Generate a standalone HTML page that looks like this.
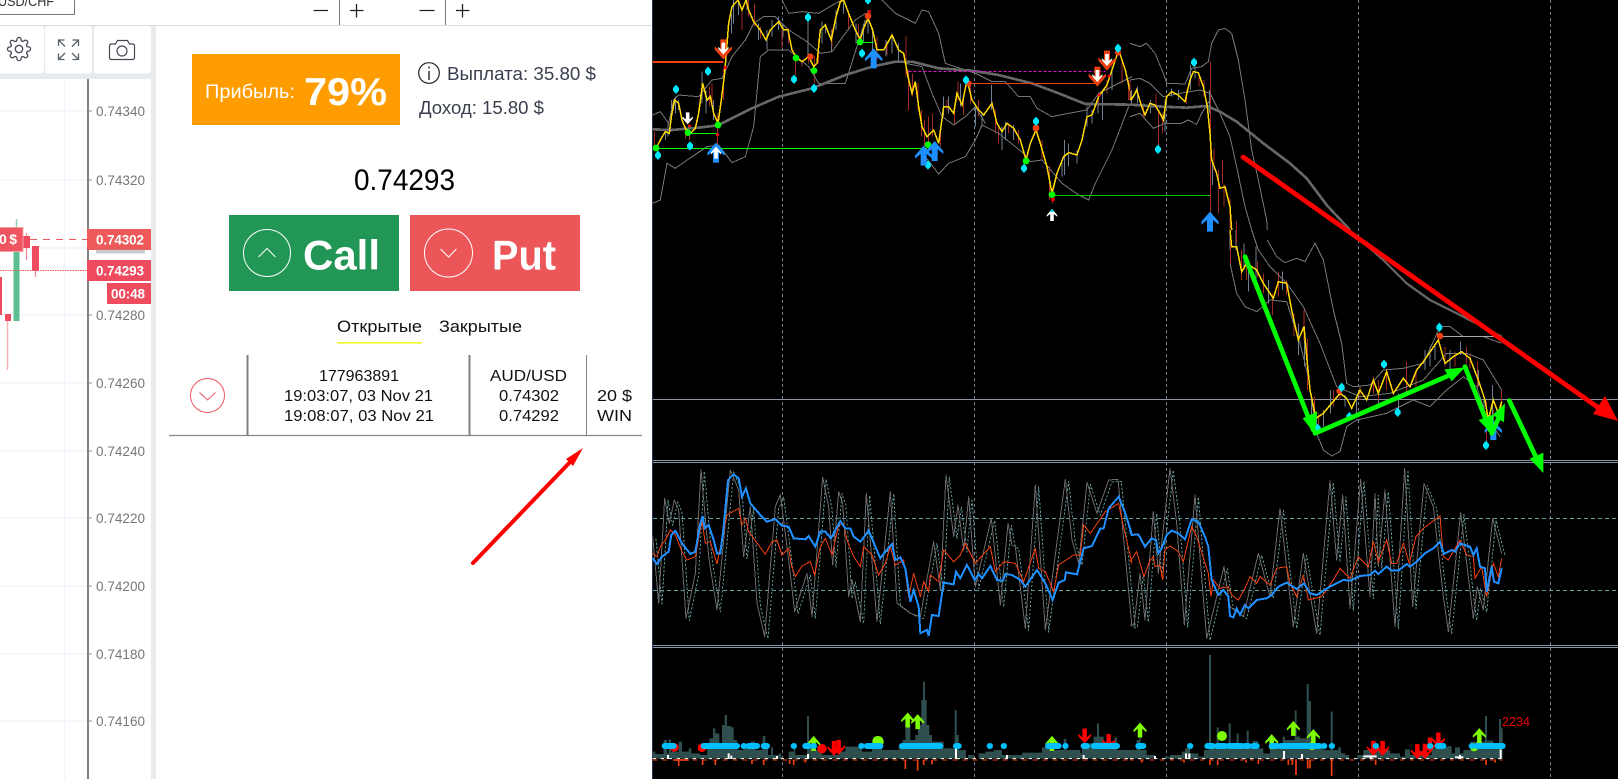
<!DOCTYPE html>
<html lang="ru"><head><meta charset="utf-8"><title>Chart</title>
<style>html,body{margin:0;padding:0;background:#fff;width:1618px;height:779px;overflow:hidden}svg{display:block}text{font-family:"Liberation Sans",sans-serif}</style></head><body>
<svg width="1618" height="779" viewBox="0 0 1618 779" xmlns="http://www.w3.org/2000/svg">
<defs>
<polygon id="up" points="0,-30 26,0 26,9 9,-5 9,30 -9,30 -9,-5 -26,9 -26,0"/>
<polygon id="dia" points="0,-14 9,-4 9,4 0,14 -9,4 -9,-4"/>
<polyline id="os1" fill="none" stroke-linejoin="round" points="62,290 80,490 98,175 112,250 127,180 140,210 162,535 190,400 207,88 230,350 255,510 295,90 320,150 335,350 355,200 375,490 398,590 430,200 445,165 470,360 488,515 525,400 540,530 572,112 590,200 602,375 620,155 632,190 650,470 660,420 685,545 703,160 735,545 775,155 795,490 835,520 865,530 905,305 925,450 942,105 965,290 978,195 995,330 1010,170 1030,440 1078,235 1105,495 1128,250 1140,315 1150,320 1180,565 1210,135 1240,570 1300,118 1320,300 1340,370 1365,127 1395,220 1430,120 1458,118 1480,350 1500,560"/>
<polyline id="os2" fill="none" stroke-linejoin="round" points="0,555 12,555 30,400 45,540 70,215 85,400 120,85 140,250 163,555 195,165 230,595 282,380 300,500 340,530 385,340 420,470 450,205 490,560 520,340 560,580 600,122 620,360 638,165 660,505 692,118 720,470 735,160 745,380 765,150 795,560 824,85 848,500 882,130 910,200 940,470 955,575 992,218 1030,535 1042,440 1060,510 1088,235 1115,340"/>
</defs>
<!-- left -->
<rect x="151" y="26" width="5" height="753" fill="#e8ebee"/>
<rect x="0" y="26" width="151" height="53" fill="#e8ebee"/>
<rect x="-6" y="26" width="50" height="47.500" rx="3" fill="#fff"/>
<rect x="45" y="26" width="47" height="47.500" rx="3" fill="#fff"/>
<rect x="94" y="26" width="57" height="47.500" rx="3" fill="#fff"/>
<rect x="-6" y="79" width="157" height="700" rx="4" fill="#fff"/>
<path d="M0 25.500H652" stroke="#ddd" stroke-width="1"/>
<rect x="-5" y="-10" width="79.500" height="24.500" fill="#fff" stroke="#777"/>
<text x="-2" y="6" font-size="14" fill="#333" textLength="56" lengthAdjust="spacingAndGlyphs">USD/CHF</text>
<g transform="translate(6.400,36.400) scale(1.050)" fill="none" stroke="#454a55" stroke-width="1.250" stroke-linejoin="round" stroke-linecap="round"><circle cx="12" cy="12" r="3.500"/><path d="M19.4 15a1.65 1.65 0 0 0 .33 1.82l.06.06a2 2 0 0 1 0 2.83 2 2 0 0 1-2.83 0l-.06-.06a1.65 1.65 0 0 0-1.82-.33 1.65 1.65 0 0 0-1 1.51V21a2 2 0 0 1-2 2 2 2 0 0 1-2-2v-.09A1.65 1.65 0 0 0 9 19.4a1.65 1.65 0 0 0-1.82.33l-.06.06a2 2 0 0 1-2.83 0 2 2 0 0 1 0-2.83l.06-.06a1.65 1.65 0 0 0 .33-1.82 1.65 1.65 0 0 0-1.51-1H3a2 2 0 0 1-2-2 2 2 0 0 1 2-2h.09A1.65 1.65 0 0 0 4.6 9a1.65 1.65 0 0 0-.33-1.82l-.06-.06a2 2 0 0 1 0-2.83 2 2 0 0 1 2.83 0l.06.06a1.65 1.65 0 0 0 1.82.33H9a1.65 1.65 0 0 0 1-1.51V3a2 2 0 0 1 2-2 2 2 0 0 1 2 2v.09a1.65 1.65 0 0 0 1 1.51 1.65 1.65 0 0 0 1.82-.33l.06-.06a2 2 0 0 1 2.83 0 2 2 0 0 1 0 2.83l-.06.06a1.65 1.65 0 0 0-.33 1.82V9a1.65 1.65 0 0 0 1.51 1H21a2 2 0 0 1 2 2 2 2 0 0 1-2 2h-.09a1.65 1.65 0 0 0-1.51 1z"/></g>
<path d="M58.500 46V40H64.500M58.500 40L65 46.500M72.500 40H78.500V46M78.500 40L72 46.500M58.500 53.500V59.500H64.500M58.500 59.500L65 53M72.500 59.500H78.500V53.500M78.500 59.500L72 53" fill="none" stroke="#5a6069" stroke-width="1.300"/>
<path d="M111.500 44H115.500L117.500 40.500H127.500L129.500 44H132.500Q134.500 44 134.500 46V57.500Q134.500 59.500 132.500 59.500H111.500Q109.500 59.500 109.500 57.500V46Q109.500 44 111.500 44Z" fill="none" stroke="#454a55" stroke-width="1.200"/>
<circle cx="122" cy="51" r="5" fill="none" stroke="#454a55" stroke-width="1.200"/>
<!-- plot grid -->
<path d="M0 111H87M0 180H87M0 248H87M0 315H87M0 383H87M0 451H87M0 518H87M0 586H87M0 654H87M0 721H87M64.500 79V779" stroke="#eef4f9" stroke-width="1.200"/>
<path d="M88 79V779" stroke="#808080" stroke-width="2"/>
<path d="M89 111H92M89 180H92M89 315H92M89 383H92M89 451H92M89 518H92M89 586H92M89 654H92M89 721H92" stroke="#888"/>
<g font-size="13.500" fill="#777">
<text x="96" y="116" textLength="49">0.74340</text>
<text x="96" y="185" textLength="49">0.74320</text>
<text x="96" y="320" textLength="49">0.74280</text>
<text x="96" y="388" textLength="49">0.74260</text>
<text x="96" y="456" textLength="49">0.74240</text>
<text x="96" y="523" textLength="49">0.74220</text>
<text x="96" y="591" textLength="49">0.74200</text>
<text x="96" y="659" textLength="49">0.74180</text>
<text x="96" y="726" textLength="49">0.74160</text>
</g>
<path d="M7.500 320V370" stroke="#f4b5bb" stroke-width="1.500"/>
<path d="M16.500 219V252" stroke="#8fd4b2" stroke-width="1.500"/>
<path d="M26.500 233V260M35.500 270V277" stroke="#f08a94" stroke-width="1.300"/>
<rect x="0" y="277" width="2" height="38" fill="#ee4b5f"/>
<rect x="5" y="314" width="6" height="7" fill="#ee4b5f"/>
<rect x="13.500" y="250" width="6" height="71" fill="#5cbf8f"/>
<rect x="23.500" y="236" width="6.500" height="12" fill="#ee4b5f"/>
<rect x="32" y="246" width="7" height="25" fill="#ee4b5f"/>
<path d="M30 239.500H87" stroke="#ee5560" stroke-dasharray="7 6" stroke-width="1"/>
<path d="M0 270.500H87" stroke="#ee5560" stroke-dasharray="1.500 1" stroke-width="1"/>
<rect x="-3" y="227.500" width="26" height="24" fill="#ee5560" stroke="#f4a0a6"/>
<text x="-1" y="244" font-size="14" font-weight="bold" fill="#fff" xml:space="preserve" textLength="18">0 $</text>
<rect x="87" y="229" width="64" height="21" fill="#ee5a5a"/>
<rect x="96" y="249.500" width="49" height="4" fill="#9a9a9a" opacity=".5"/>
<rect x="87" y="260" width="64" height="21" fill="#ee4b5f"/>
<rect x="107" y="283" width="44" height="21" fill="#ee4b5f"/>
<g font-size="13.500" font-weight="bold" fill="#fff">
<text x="96" y="244.500" textLength="48">0.74302</text>
<text x="96" y="275.500" textLength="48">0.74293</text>
<text x="111" y="298.500" textLength="34">00:48</text>
</g>
<!-- top controls -->
<path d="M313.500 10.500H328M419.500 10.500H434.500M350 10.500H363.500M356.500 4V17.500M456 10.500H469.500M462.500 4V17.500" stroke="#222" stroke-width="1.300"/>
<path d="M339.500 0V25M445.500 0V25" stroke="#777" stroke-width="1"/>
<!-- panel -->
<rect x="192" y="54" width="208" height="71" fill="#ff9c00"/>
<text x="205" y="98" font-size="19.500" fill="#fff" textLength="90" lengthAdjust="spacingAndGlyphs">Прибыль:</text>
<text x="304" y="105" font-size="39" font-weight="bold" fill="#fff" textLength="83" lengthAdjust="spacingAndGlyphs">79%</text>
<circle cx="429" cy="73" r="10.300" fill="none" stroke="#222" stroke-width="1.200"/>
<path d="M429 71V80M429 66.500V68.500" stroke="#222" stroke-width="1.400"/>
<text x="447" y="80" font-size="18.500" fill="#3a3f4d" textLength="149" lengthAdjust="spacingAndGlyphs">Выплата: 35.80 $</text>
<text x="419" y="114" font-size="18.500" fill="#3a3f4d" textLength="125" lengthAdjust="spacingAndGlyphs">Доход: 15.80 $</text>
<text x="354" y="190" font-size="30" fill="#000" textLength="101" lengthAdjust="spacingAndGlyphs">0.74293</text>
<rect x="229" y="215" width="170" height="76" fill="#229654"/>
<circle cx="267" cy="253" r="23.500" fill="none" stroke="#fff" stroke-width="1"/>
<path d="M258.500 257L267 248.500L275.500 257" fill="none" stroke="#fff" stroke-width="1"/>
<text x="303" y="269.500" font-size="42" font-weight="bold" fill="#fff" textLength="77" lengthAdjust="spacingAndGlyphs">Call</text>
<rect x="410" y="215" width="170" height="76" fill="#ed5658"/>
<circle cx="448.500" cy="253" r="24" fill="none" stroke="#fff" stroke-width="1"/>
<path d="M440.500 249L448.500 257L456.500 249" fill="none" stroke="#fff" stroke-width="1"/>
<text x="492" y="269.500" font-size="42" font-weight="bold" fill="#fff" textLength="64" lengthAdjust="spacingAndGlyphs">Put</text>
<text x="337" y="332" font-size="17" fill="#111" textLength="85" lengthAdjust="spacingAndGlyphs">Открытые</text>
<text x="439" y="332" font-size="17" fill="#111" textLength="83" lengthAdjust="spacingAndGlyphs">Закрытые</text>
<rect x="337" y="342" width="85" height="1.700" fill="#eef83a"/>
<path d="M169 435.500H642" stroke="#888" stroke-width="1.300"/>
<path d="M247.500 355V436M469.500 355V436" stroke="#808080" stroke-width="2"/>
<path d="M586.500 355V436" stroke="#808080" stroke-width="1"/>
<circle cx="207.500" cy="395.500" r="17" fill="none" stroke="#ee5560" stroke-width="1"/>
<path d="M199.500 392.500L207.500 400L215.500 392.500" fill="none" stroke="#ee5560" stroke-width="1"/>
<g font-size="16" fill="#111">
<text x="319" y="381" textLength="80" lengthAdjust="spacingAndGlyphs">177963891</text>
<text x="284" y="401" textLength="149" lengthAdjust="spacingAndGlyphs">19:03:07, 03 Nov 21</text>
<text x="284" y="421" textLength="150" lengthAdjust="spacingAndGlyphs">19:08:07, 03 Nov 21</text>
<text x="490" y="381" textLength="77" lengthAdjust="spacingAndGlyphs">AUD/USD</text>
<text x="499" y="401" textLength="60" lengthAdjust="spacingAndGlyphs">0.74302</text>
<text x="499" y="421" textLength="60" lengthAdjust="spacingAndGlyphs">0.74292</text>
<text x="597" y="401" textLength="35" lengthAdjust="spacingAndGlyphs">20 $</text>
<text x="597" y="421" textLength="35" lengthAdjust="spacingAndGlyphs">WIN</text>
</g>
<path d="M473 563L573 459" stroke="#f00" stroke-width="4" stroke-linecap="round"/>
<polygon points="583,448 573,466 566,459" fill="#f00"/>
<!-- terminal -->
<rect x="652" y="0" width="966" height="779" fill="#000"/>
<path d="M652.500 0V779" stroke="#2a3560" stroke-width="1"/>
<path d="M782.500 0V779M974.500 0V779M1166.500 0V779M1358.500 0V779M1550.500 0V779" stroke="#71808f" stroke-dasharray="3 3" stroke-width="1"/>
<path d="M653 399.500H1618" stroke="#8a94a0" stroke-width="1"/>
<path d="M653 460.500H1618M653 462.500H1618M653 645.500H1618M653 647.500H1618" stroke="#8998ad" stroke-width="1"/>
<path d="M653 518.500H1618M653 590.500H1618" stroke="#5f9ea0" stroke-dasharray="4 3" stroke-width="1"/>
<!-- main z4 -->
<g transform="translate(632,0) scale(.33333)" fill="none" shape-rendering="crispEdges">
<path d="M100 385V420M108 370V410M118 300V360M130 290V340M140 300V330M210 215V310M222 270V340M245 300V360M298 40V100M305 0V70M320 0V45M345 0V30M380 70V120M405 90V150M420 60V110M440 50V90M453 70V110M528 60V170M548 190V240M570 65V130M580 70V100M598 90V155M612 30V90M635 0V40M672 70V130M695 70V125M708 30V100M722 85V150M762 120V170M780 100V160M800 130V185M935 290V350M950 290V340M985 250V320M1030 310V380M1050 340V380M1078 255V330M1110 380V450M1120 365V420M1145 375V420M1290 480V530M1298 420V525M1310 430V500M1335 450V490M1365 320V380M1380 330V370M1398 280V340M1412 270V360M1440 200V270" stroke="#708090" stroke-width="3"/>
<path d="M67 395V440M160 380V415M172 375V420M232 260V320M240 250V320M256 340V440M275 205V300M330 30V90M350 0V50M368 10V80M385 80V115M450 90V145M470 85V130M490 170V225M510 185V200M530 170V190M548 170V250M560 120V190M600 85V140M650 40V90M680 70V110M735 110V180M765 125V165M822 110V230M830 210V330M842 220V290M858 250V330M868 330V410M878 360V440M890 350V450M902 340V410M925 400V440M945 300V330M968 320V375M978 245V300M995 300V345M1015 250V310M1040 300V350M1090 330V400M1100 380V430M1130 370V400M1160 390V430M1230 420V480M1252 500V600M1262 590V610M1400 280V320M1425 240V280M1470 180V250M1490 240V300" stroke="#a52a20" stroke-width="3"/>
<g stroke="#777" stroke-width="3">
<polyline points="62,345 85,335 110,370 125,300 140,285 200,290 240,240 270,235 300,170 340,120 365,70 395,50 430,50 470,90 525,125 565,160 600,155 640,100 670,60 700,40"/>
<polyline points="450,0 470,40 510,35 560,40 610,10 630,0"/>
<polyline points="750,0 790,40 850,70 870,30 890,35 920,100 940,190 1030,220 1080,245 1120,245 1160,290 1195,290 1215,325 1260,350 1310,340 1365,330 1400,280 1460,250 1500,230"/>
<polyline points="62,610 85,600 105,490 130,505 180,470 225,440 260,435 300,488 340,470 365,380 385,170 410,150 470,150 530,200 560,250 640,250 700,60"/>
<polyline points="820,190 870,200 900,280 930,350 965,375 1000,350 1030,320 1060,370"/>
<polyline points="880,470 920,522 950,490 1000,470 1030,420 1050,375 1100,400 1175,460 1195,485 1230,480 1290,550 1340,585 1370,600 1390,550 1440,450 1490,320"/>
</g>
<polyline points="62,388 120,390 200,383 258,376 300,355 360,325 440,290 540,265 640,225 720,200 790,185 840,185 920,205 1020,212 1100,225 1200,250 1280,280 1360,312 1500,314" stroke="#666" stroke-width="8" stroke-linejoin="round"/>
<path d="M72 445H885M168 400H255M685 127H725" stroke="#0f0" stroke-width="3"/>
<path d="M1260 587H1500" stroke="#0c0" stroke-width="3"/>
<path d="M62 186H275" stroke="#f04010" stroke-width="6"/>
<path d="M1010 250H1395" stroke="#f04010" stroke-width="3"/>
<path d="M830 214H1420" stroke="#e010d0" stroke-width="3" stroke-dasharray="9 6"/>
<polyline points="65,440 72,445 85,420 100,395 112,400 118,350 128,300 140,310 150,360 160,385 175,400 190,385 200,340 212,250 225,300 235,290 245,340 258,370 268,300 278,220 282,170 290,70 300,20 318,0 330,30 342,0 350,30 365,65 385,90 402,120 415,90 440,65 455,90 468,90 480,150 495,175 510,185 530,170 545,200 555,190 565,90 580,75 598,120 612,50 625,5 635,0 650,40 670,90 685,120 695,85 708,55 722,90 735,150 755,150 780,105 800,150 815,160 828,230 840,280 850,245 860,320 870,380 885,410 905,390 920,430 935,320 950,320 965,340 975,280 990,315 1005,240 1020,300 1040,330 1055,345 1080,310 1095,370 1110,395 1125,370 1145,385 1165,420 1182,480 1195,430 1212,390 1225,430 1245,500 1260,580 1275,520 1295,470 1310,458 1335,465 1350,420 1365,350 1380,345 1400,290 1425,255 1445,195 1460,150 1480,210 1500,300" stroke="#ffd800" stroke-width="4.500"/>
<g shape-rendering="auto">
<g fill="#0f0" stroke="none"><circle cx="72" cy="444" r="10"/><circle cx="168" cy="398" r="10"/><circle cx="258" cy="375" r="10"/><circle cx="492" cy="174" r="10"/><circle cx="546" cy="212" r="10"/><circle cx="684" cy="126" r="10"/><circle cx="888" cy="434" r="10"/><circle cx="1182" cy="483" r="10"/><circle cx="1260" cy="584" r="10"/></g>
<g fill="#f04010" stroke="none"><circle cx="535" cy="170" r="10"/><circle cx="708" cy="48" r="10"/><circle cx="1010" cy="250" r="9"/><circle cx="1212" cy="384" r="10"/><circle cx="1458" cy="158" r="9"/></g>
<g fill="#f00" stroke="none"><rect x="275" y="199" width="9" height="8"/><rect x="168" y="374" width="9" height="7"/><rect x="252" y="401" width="9" height="7"/><rect x="1258" y="594" width="10" height="9"/><rect x="1397" y="281" width="9" height="8"/><rect x="1427" y="224" width="9" height="8"/><rect x="708" y="31" width="9" height="7"/></g>
<g fill="#00e8ff" stroke="none"><use href="#dia" x="78" y="466"/><use href="#dia" x="132" y="268"/><use href="#dia" x="174" y="438"/><use href="#dia" x="228" y="214"/><use href="#dia" x="486" y="238"/><use href="#dia" x="528" y="52"/><use href="#dia" x="546" y="265"/><use href="#dia" x="690" y="160"/><use href="#dia" x="888" y="495"/><use href="#dia" x="1002" y="240"/><use href="#dia" x="1176" y="505"/><use href="#dia" x="1212" y="364"/><use href="#dia" x="1458" y="145"/><use href="#dia" x="708" y="0"/></g>
<g stroke="none"><g fill="#1e90ff"><use href="#up" transform="translate(252,458)"/><use href="#up" transform="translate(725,175)"/><use href="#up" transform="translate(875,467)"/><use href="#up" transform="translate(908,453)"/></g>
<use href="#up" fill="#fff" transform="translate(252,458) scale(.6)"/>
<use href="#up" fill="#f04010" transform="translate(274,148) rotate(180)"/><use href="#up" fill="#fff" transform="translate(274,146) rotate(180) scale(.6)"/>
<use href="#up" fill="#f04010" transform="translate(1396,230) rotate(180)"/><use href="#up" fill="#fff" transform="translate(1396,228) rotate(180) scale(.6)"/>
<use href="#up" fill="#f04010" transform="translate(1425,182) rotate(180)"/><use href="#up" fill="#fff" transform="translate(1425,180) rotate(180) scale(.6)"/>
<use href="#up" fill="#fff" transform="translate(167,355) rotate(180) scale(.6)"/>
<use href="#up" fill="#fff" transform="translate(1260,645) scale(.6)"/><polygon points="1260,626 1266,636 1254,636" fill="#00e8ff"/></g>
</g>
</g>
<!-- main z5 -->
<g transform="translate(1130,0) scale(.33333)" fill="none" shape-rendering="crispEdges">
<path d="M5 270V310M22 260V310M62 300V340M105 300V395M125 265V290M145 270V300M182 195V270M195 190V235M238 270V340M248 480V555" stroke="#708090" stroke-width="3"/>
<path d="M0 240V300M40 310V350M78 280V325M85 330V440M97 340V400M170 270V310M207 225V260M222 240V290M241 185V640M252 445V510M265 510V640M277 480V550M282 550V620M300 595V690M319 665V690" stroke="#a52a20" stroke-width="3"/>
<g stroke="#777" stroke-width="3">
<polyline points="0,130 30,140 50,130 75,160 100,220 110,250 165,252 185,205 215,200 235,185 245,130 265,90 285,85 305,100 325,180 345,300 365,450 385,540 410,660 412,690"/>
<polyline points="0,240 30,235 60,250 100,290 150,280 210,270 240,280 270,340 300,410 320,500 345,620 365,690"/>
<polyline points="0,350 30,340 70,385 105,370 155,370 175,360 200,373 215,340 240,300"/>
</g>
<polyline points="0,314 100,320 170,323 230,318 270,335 320,365 400,430 480,490 530,535 590,615 660,690" stroke="#666" stroke-width="8" stroke-linejoin="round"/>
<path d="M0 586H240" stroke="#0c0" stroke-width="3"/>
<polyline points="0,300 10,290 20,270 35,320 45,345 60,310 75,315 90,340 100,360 110,290 125,275 145,285 165,305 180,240 190,215 205,218 220,260 232,320 240,400 245,480 260,520 270,565 285,560 300,620 305,690" stroke="#ffd800" stroke-width="4.500"/>
<g shape-rendering="auto"><g fill="#00e8ff" stroke="none"><use href="#dia" x="192" y="187"/><use href="#dia" x="84" y="448"/></g>
<use href="#up" fill="#1e90ff" transform="translate(240,665)"/></g>
</g>
<!-- main z6 -->
<g transform="translate(1130,230) scale(.33333)" fill="none" shape-rendering="crispEdges">
<path d="M300 0V60M318 0V60M342 40V120M355 100V185M378 50V180M415 150V220M458 125V180M505 280V375M523 330V410M545 510V590M560 545V590M580 540V590M602 480V550M645 495V530M680 510V550M745 490V520M805 490V545M885 360V420M900 350V410M915 340V390M960 360V420M992 335V375M1045 420V470M1062 510V560M1088 465V560" stroke="#708090" stroke-width="3"/>
<path d="M302 0V105M320 0V40M335 60V150M350 90V150M382 95V140M400 130V190M428 190V255M445 125V200M470 150V195M492 250V320M522 240V330M532 325V480M553 500V600M565 550V590M610 480V530M630 480V510M690 470V510M730 440V490M745 450V510M770 415V480M830 395V450M830 440V490M858 420V480M945 350V410M975 365V410M1010 350V400M1020 370V415M1043 395V475M1070 515V640M1090 540V600M1115 480V560" stroke="#a52a20" stroke-width="3"/>
<g stroke="#777" stroke-width="3">
<polyline points="412,30 440,80 465,98 500,85 525,95 555,40 580,90 610,240 635,340 650,460 670,470 720,465 760,420 820,415 880,400 930,290 960,290 1000,320 1060,320 1115,340"/>
<polyline points="365,0 385,60 420,110 470,160 520,230 570,340 620,470 690,500 780,490 880,450 950,370 1010,370 1060,390 1115,480"/>
<polyline points="300,100 320,190 345,230 380,245 420,210 470,215 510,340 535,440 560,610 580,660 605,678 630,665 650,590 680,570 770,550 850,510 900,530 950,480 1000,440 1040,470 1070,560 1110,620"/>
</g>
<polyline points="680,20 760,90 830,160 900,210 1000,260 1115,320" stroke="#666" stroke-width="7" stroke-linejoin="round"/>
<path d="M930 320H1115" stroke="#aaa" stroke-width="3"/>
<polyline points="300,0 305,50 320,50 335,125 350,100 380,120 400,160 430,205 445,155 470,160 485,240 505,330 522,290 532,400 540,480 558,565 580,550 605,520 630,490 650,505 665,535 690,480 710,510 730,450 745,490 770,425 790,490 820,445 840,470 860,420 880,395 925,330 945,400 970,380 995,365 1020,385 1045,450 1065,510 1075,570 1090,510 1105,550 1115,515" stroke="#ffd800" stroke-width="4.500"/>
<g shape-rendering="auto">
<g stroke="none"><circle cx="628" cy="483" r="9" fill="#f04010"/><circle cx="930" cy="318" r="10" fill="#f04010"/>
<g fill="#00e8ff"><use href="#dia" x="928" y="292"/><use href="#dia" x="635" y="472"/><use href="#dia" x="762" y="403"/><use href="#dia" x="803" y="547"/><use href="#dia" x="563" y="595"/><use href="#dia" x="658" y="560"/><use href="#dia" x="1068" y="646"/></g>
<use href="#up" fill="#1e90ff" transform="translate(1090,600) scale(1)"/></g>
<path d="M345 80L550 600M555 610L960 435M1005 410L1080 600M1085 610L1115 545M1138 512L1222 690" stroke="#00ff00" stroke-width="14" stroke-linecap="round"/>
<g fill="#00ff00" stroke="none"><polygon points="555,612 518,565 562,545"/><polygon points="1005,412 943,418 965,454"/><polygon points="1085,612 1046,570 1092,553"/><polygon points="1125,520 1088,555 1122,577"/><polygon points="1240,729 1199,686 1240,668"/></g>
</g>
</g>
<path d="M1243 157L1603 411" stroke="#f00" stroke-width="4.800" stroke-linecap="round"/>
<polygon points="1618,421 1605,396 1593,414" fill="#f00"/>
<!-- oscillator z7 -->
<g transform="translate(632,440) scale(.33333)" fill="none" shape-rendering="crispEdges">
<use href="#os1" stroke="#5f9090" stroke-width="3" stroke-dasharray="7 5" transform="translate(10,6)"/>
<use href="#os1" stroke="#6a6a6a" stroke-width="3"/>
<polyline stroke="#f04010" stroke-width="3" points="62,340 75,350 85,320 100,300 115,270 130,285 150,335 165,360 190,350 210,240 220,310 235,305 255,372 285,225 320,205 330,255 340,235 350,275 400,343 420,305 435,300 450,345 470,325 478,375 490,410 510,378 535,365 548,405 565,320 580,295 600,345 620,255 635,250 645,300 665,350 685,380 695,320 720,345 740,405 760,370 775,320 790,375 815,360 830,470 845,400 865,470 875,425 890,455 895,405 920,425 935,330 965,365 985,345 1000,310 1030,370 1075,320 1090,395 1115,365 1150,370 1175,425 1210,325 1220,385 1240,395 1265,455 1280,375 1325,345 1345,345 1355,255 1375,280 1420,215 1460,190 1470,240 1500,370"/>
<polyline stroke="#1e90ff" stroke-width="6" points="62,355 75,372 90,350 110,335 118,285 130,272 150,310 175,342 190,335 205,250 212,228 218,265 230,255 245,300 255,340 265,340 275,260 288,120 305,103 320,115 330,170 342,145 355,190 385,225 405,245 430,237 450,257 470,260 485,295 520,298 530,288 550,320 565,275 580,275 597,295 625,243 640,265 655,265 665,290 685,305 710,272 745,355 760,335 780,312 790,360 805,352 820,385 835,485 845,450 860,500 865,580 885,570 890,588 900,525 920,528 935,428 965,433 972,395 985,415 1005,375 1028,420 1040,402 1050,415 1075,378 1095,420 1113,422 1120,402 1140,405 1165,420 1180,440 1215,390 1240,430 1262,480 1280,428 1298,420 1302,397 1335,403 1355,325 1380,318 1405,265 1415,265 1430,205 1460,170 1480,220 1500,285"/>
</g>
<!-- oscillator z8 -->
<g transform="translate(1130,440) scale(.33333)" fill="none" shape-rendering="crispEdges">
<use href="#os2" stroke="#5f9090" stroke-width="3" stroke-dasharray="7 5" transform="translate(10,6)"/>
<use href="#os2" stroke="#6a6a6a" stroke-width="3"/>
<polyline stroke="#f04010" stroke-width="3" points="0,365 20,335 42,410 58,365 70,350 75,380 90,375 98,420 105,330 120,318 145,335 160,365 185,260 200,290 235,400 243,470 250,420 270,445 295,440 305,465 325,480 345,445 360,410 380,430 390,410 420,435 440,385 470,380 480,430 500,470 520,405 535,480 575,470 610,420 630,385 660,415 685,350 715,380 730,305 745,365 770,300 785,370 800,370 820,310 838,370 858,290 880,265 930,228 940,350 955,360 990,300 1010,345 1030,350 1035,415 1055,380 1070,470 1090,370 1105,410 1115,355"/>
<polyline stroke="#1e90ff" stroke-width="6" points="0,270 5,285 25,283 45,320 65,295 78,300 85,340 95,325 110,285 125,272 145,280 165,298 185,238 205,245 225,290 235,320 245,420 265,465 280,450 295,470 300,528 310,532 320,505 330,525 345,495 355,505 380,480 410,475 425,465 445,440 470,428 500,447 522,430 540,460 560,465 600,440 640,420 660,422 690,408 720,405 735,392 745,402 770,380 785,392 805,392 830,372 840,380 860,365 885,340 910,325 930,305 942,342 965,330 975,335 990,310 1020,320 1030,345 1040,325 1050,380 1065,385 1070,455 1085,380 1092,425 1105,430 1115,385"/>
</g>
<!-- volume z9 -->
<g transform="translate(632,640) scale(.33333)">
<path fill="#2f4f4f" d="M62 356V335H70V342H95V300H105V340H110V298H117V335H140V305H150V335H170V325H178V340H205V345H225V310H232V295H243V265H250V280H262V310H270V255H278V225H285V258H298V262H305V300H315V330H335V320H355V305H370V330H392V288H400V320H408V345H417V322H423V345H440V340H448V356ZM470 356V335H485V325H490V345H525V228H531V310H540V330H570V345H620V335H640V320H690V335H720V310H725V290H750V330H800V320H812V300H820V250H835V300H850V285H858V255H868V180H873V125H879V180H884V255H892V285H900V305H935V325H968V210H974V285H980V330H1002V356ZM1008 356V345H1025V356ZM1040 356V340H1060V335H1085V330H1110V345H1170V338H1230V322H1260V330H1295V297H1303V330H1345V340H1350V310H1385V290H1395V250H1401V290H1415V305H1448V292H1455V330H1500V356Z"/>
<path d="M62 356H1500" stroke="#fff" stroke-width="3" stroke-dasharray="10 14"/>
<path d="M108 345V357M290 340V357M298 347V357M528 342V357M972 325V357M1125 345V357M435 348V357M1355 345V357" stroke="#fff" stroke-width="6"/>
<path d="M62 360H1500" stroke="#f04010" stroke-width="3" stroke-dasharray="14 16"/>
<path d="M125 360H170M140 360V378M212 360V375M250 360V375M360 360V372M395 360V375M473 360V372M485 360V375M820 360V387M857 360V392M875 360V375M900 360V373M520 360V368" stroke="#f04010" stroke-width="5"/>
<g fill="#f00"><circle cx="127" cy="322" r="13"/><circle cx="210" cy="323" r="13"/><circle cx="570" cy="326" r="14"/>
<use href="#up" transform="translate(1358,288) rotate(180) scale(.75)"/><use href="#up" transform="translate(1430,305) rotate(180) scale(.75)"/><use href="#up" transform="translate(620,322) rotate(180) scale(.75)"/><use href="#up" transform="translate(606,325) rotate(180) scale(.75)"/></g>
<g fill="#7fff00"><use href="#up" transform="translate(545,310) scale(.75)"/><use href="#up" transform="translate(827,240) scale(.75)"/><use href="#up" transform="translate(857,245) scale(.75)"/><use href="#up" transform="translate(1260,310) scale(.75)"/><circle cx="738" cy="305" r="17"/></g>
<path d="M98 318H125M215 318H315M335 318H336M350 318H375M395 318H405M485 318H486M520 318H530M545 318H546M688 318H689M705 318H745M810 318H925M972 318H980M1073 318H1074M1115 318H1116M1248 318H1280M1300 318H1301M1355 318H1365M1385 318H1455" stroke="#00bfff" stroke-width="18" stroke-linecap="round"/>
</g>
<!-- volume z10 -->
<g transform="translate(1130,640) scale(.33333)">
<path fill="#2f4f4f" d="M0 356V330H20V300H28V280H32V330H50V345H75V356ZM105 356V350H120V345H155V335H165V325H180V340H205V350H222V330H237V45H243V320H260V262H266V310H296V250H302V310H320V280H326V320H350V272H356V310H368V303H385V325H400V340H420V310H458V290H465V300H494V212H500V290H510V295H530V132H536V183H543V310H580V330H602V215H608V330H625V322H633V340H645V345H657V356ZM682 356V345H700V330H780V340H810V350H825V328H840V345H905V325H930V320H955V318H965V340H975V322H990V340H1000V330H1022V305H1065V228H1071V302H1090V310H1107V237H1113V265H1118V356Z"/>
<path d="M0 356H1118" stroke="#fff" stroke-width="3" stroke-dasharray="10 14"/>
<path d="M168 340V357M178 340V357M462 333V357M516 342V357M722 348V357M1112 328V357M990 345V357M75 348V357" stroke="#fff" stroke-width="6"/>
<path d="M700 349H740M975 352H1000" stroke="#fff" stroke-width="6"/>
<path d="M0 360H1118" stroke="#f04010" stroke-width="3" stroke-dasharray="12 18"/>
<path d="M35 358V368M162 358V368M240 358V375M263 358V375M348 358V368M385 358V372M475 358V375M487 358V375M498 358V405M533 358V385M540 358V385M605 358V408M737 358V375M1068 358V375M1095 358V368" stroke="#f04010" stroke-width="5"/>
<g fill="#7fff00"><use href="#up" transform="translate(30,270) scale(.75)"/><use href="#up" transform="translate(425,305) scale(.75)"/><use href="#up" transform="translate(490,265) scale(.75)"/><use href="#up" transform="translate(550,290) scale(.75)"/><use href="#up" transform="translate(1048,287) scale(.75)"/><circle cx="276" cy="288" r="15"/><circle cx="1032" cy="322" r="12"/><circle cx="546" cy="318" r="12"/></g>
<g fill="#f00"><use href="#up" transform="translate(730,325) rotate(180) scale(.75)"/><use href="#up" transform="translate(758,325) rotate(180) scale(.75)"/><use href="#up" transform="translate(862,335) rotate(180) scale(.75)"/><use href="#up" transform="translate(885,335) rotate(180) scale(.75)"/><use href="#up" transform="translate(900,315) rotate(180) scale(.75)"/><use href="#up" transform="translate(925,300) rotate(180) scale(.75)"/></g>
<path d="M25 318H40M180 318H181M232 318H248M262 318H285M297 318H335M345 318H355M370 318H380M425 318H440M452 318H568M582 318H583M605 318H606M737 318H738M900 318H901M923 318H940M1025 318H1026M1040 318H1118" stroke="#00bfff" stroke-width="18" stroke-linecap="round"/>
</g>
<text x="1502" y="726" font-size="13" fill="#e80000" textLength="28" lengthAdjust="spacingAndGlyphs">2234</text>
</svg>
</body></html>
